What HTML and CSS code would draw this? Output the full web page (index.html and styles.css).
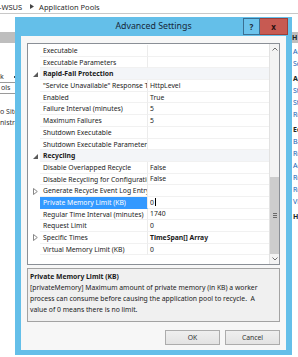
FILE: index.html
```html
<!DOCTYPE html>
<html>
<head>
<meta charset="utf-8">
<link rel="stylesheet" href="styles.css">
</head>
<body>
<div class="crumb">
  <span>-WSUS</span>
  <svg class="crumb-sep" width="4" height="5" viewBox="0 0 4 5"><polygon points="0,0 4,2.5 0,5" fill="#444"/></svg>
  <span>Application Pools</span>
</div>
<div class="workspace">
  <div class="left-pane">
    <div class="pane-head"></div>
    <div class="tree">
      <div class="tree-line">k<span class="tree-dot"></span></div>
      <div class="tree-line"><span class="tree-sel">ols</span></div>
      <div class="tree-line"></div>
      <div class="tree-line">o Sites</div>
      <div class="tree-line">nistration</div>
    </div>
  </div>
  <div class="center-pane"></div>
  <div class="right-pane">
    <div class="pane-head dark">H</div>
    <div class="actions">
      <div class="act">Add Application Pool...</div>
      <div class="act">Set Application Pool Defaults...</div>
      <div class="act head">Application Pool Tasks</div>
      <div class="act">Start</div>
      <div class="act">Stop</div>
      <div class="act">Recycle...</div>
      <div class="act head">Edit Application Pool</div>
      <div class="act">Basic Settings...</div>
      <div class="act">Recycling...</div>
      <div class="act">Advanced Settings...</div>
      <div class="act">Rename</div>
      <div class="act">Remove</div>
      <div class="act">View Applications</div>
      <div class="act head">Help</div>
    </div>
  </div>
</div>

<div class="dialog">
  <div class="titlebar">
    <div></div>
    <div class="title">Advanced Settings</div>
    <div class="caption-btns">
      <div class="cap help">?</div>
      <div class="cap close">x</div>
    </div>
  </div>
  <div class="client">
    <div class="grid">
      <div class="rows">
        <div class="row"><div class="g"></div><div class="n">Executable</div><div class="v"></div></div>
        <div class="row"><div class="g"></div><div class="n">Executable Parameters</div><div class="v"></div></div>
        <div class="row cat"><div class="g"><svg width="5" height="5" viewBox="0 0 5 5"><polygon points="5,0 5,5 0,5" fill="#5a5a5a"/></svg></div><div class="n">Rapid-Fail Protection</div></div>
        <div class="row"><div class="g"></div><div class="n">"Service Unavailable" Response Type</div><div class="v">HttpLevel</div></div>
        <div class="row"><div class="g"></div><div class="n">Enabled</div><div class="v">True</div></div>
        <div class="row"><div class="g"></div><div class="n">Failure Interval (minutes)</div><div class="v">5</div></div>
        <div class="row"><div class="g"></div><div class="n">Maximum Failures</div><div class="v">5</div></div>
        <div class="row"><div class="g"></div><div class="n">Shutdown Executable</div><div class="v"></div></div>
        <div class="row"><div class="g"></div><div class="n">Shutdown Executable Parameters</div><div class="v"></div></div>
        <div class="row cat"><div class="g"><svg width="5" height="5" viewBox="0 0 5 5"><polygon points="5,0 5,5 0,5" fill="#5a5a5a"/></svg></div><div class="n">Recycling</div></div>
        <div class="row"><div class="g"></div><div class="n">Disable Overlapped Recycle</div><div class="v">False</div></div>
        <div class="row"><div class="g"></div><div class="n">Disable Recycling for Configuration Changes</div><div class="v">False</div></div>
        <div class="row"><div class="g"><svg width="5" height="7" viewBox="0 0 5 7"><polygon points="0.5,0.5 4.3,3.5 0.5,6.5" fill="none" stroke="#7a7a7a" stroke-width="0.9"/></svg></div><div class="n">Generate Recycle Event Log Entry</div><div class="v"></div></div>
        <div class="row sel"><div class="g"></div><div class="n">Private Memory Limit (KB)</div><div class="v">0<span class="caret"></span></div></div>
        <div class="row"><div class="g"></div><div class="n">Regular Time Interval (minutes)</div><div class="v">1740</div></div>
        <div class="row"><div class="g"></div><div class="n">Request Limit</div><div class="v">0</div></div>
        <div class="row"><div class="g"><svg width="5" height="7" viewBox="0 0 5 7"><polygon points="0.5,0.5 4.3,3.5 0.5,6.5" fill="none" stroke="#7a7a7a" stroke-width="0.9"/></svg></div><div class="n">Specific Times</div><div class="v b">TimeSpan[] Array</div></div>
        <div class="row"><div class="g"></div><div class="n">Virtual Memory Limit (KB)</div><div class="v">0</div></div>
      </div>
      <div class="scrollbar">
        <div class="sb-btn"><svg width="6" height="4" viewBox="0 0 6 4"><polyline points="0.5,3.5 3,1 5.5,3.5" fill="none" stroke="#606060" stroke-width="0.9"/></svg></div>
        <div class="sb-track">
          <div class="sb-space"></div>
          <div class="sb-thumb"><span></span><span></span><span></span></div>
        </div>
        <div class="sb-btn"><svg width="6" height="4" viewBox="0 0 6 4"><polyline points="0.5,0.5 3,3 5.5,0.5" fill="none" stroke="#606060" stroke-width="0.9"/></svg></div>
      </div>
    </div>
    <div class="desc">
      <div class="desc-title">Private Memory Limit (KB)</div>
      <div class="desc-text">[privateMemory] Maximum amount of private memory (in KB) a worker<br>process can consume before causing the application pool to recycle.&nbsp; A<br>value of 0 means there is no limit.</div>
    </div>
    <div class="buttons">
      <div class="btn">OK</div>
      <div class="btn">Cancel</div>
    </div>
  </div>
</div>
</body>
</html>
```
FILE: styles.css
```css
* { box-sizing: border-box; margin: 0; padding: 0; }
html, body { width: 298px; height: 357px; }
body {
  overflow: hidden;
  background: #ffffff;
  font-family: "Noto Sans", "Liberation Sans", sans-serif;
  color: #1e1e1e;
  position: relative;
}

/* background IIS window */
.crumb {
  height: 14px;
  border-bottom: 1px solid #c8c8c8;
  display: flex;
  align-items: center;
  font-size: 7.5px;
  color: #2a2a2a;
  margin-left: -1px;
  white-space: nowrap;
}
.crumb-sep { margin: 0 5px 0 8px; }

.workspace {
  display: flex;
  padding-top: 18px;
  height: 343px;
}
.left-pane { width: 80px; overflow: hidden; }
.center-pane { flex: 1; }
.right-pane { width: 6px; overflow: hidden; }
.pane-head {
  height: 11px;
  background: #bebebe;
  font-size: 7px;
  line-height: 11px;
  font-weight: bold;
  color: #222;
  white-space: nowrap;
}
.tree { padding-top: 28px; font-size: 7px; color: #333; white-space: nowrap; }
.tree-line { height: 11.5px; line-height: 11.5px; display: flex; align-items: center; }
.tree-dot { width: 2px; height: 2px; background: #444; margin-left: 10px; }
.tree-sel { border: 1px solid #9a9a9a; padding: 0 8px 0 0; line-height: 10px; margin-left: -3px; padding-left: 3px; }
.actions { padding-top: 3px; font-size: 7px; white-space: nowrap; padding-left: 1px; }
.act { height: 12px; line-height: 12px; color: #1560b5; }
.act.head { color: #222; font-weight: bold; margin-top: 3px; }

/* dialog */
.dialog {
  position: absolute;
  left: 15px;
  top: 17px;
  width: 277px;
  height: 338px;
  background: #64bfe9;
  padding: 0 6px 5px;
  display: flex;
  flex-direction: column;
}
.titlebar {
  height: 19px;
  display: grid;
  grid-template-columns: 1fr auto 1fr;
  align-items: start;
}
.title {
  font-size: 8.8px;
  line-height: 19px;
  color: #17283a;
  white-space: nowrap;
}
.caption-btns {
  display: flex;
  justify-content: flex-end;
  margin-top: 1px;
  margin-right: -2px;
}
.cap {
  height: 17px;
  font-size: 8px;
  font-weight: bold;
  display: flex;
  align-items: center;
  justify-content: center;
}
.help {
  width: 17px;
  background: #6cc3ec;
  border: 1px solid #3b6f92;
  color: #1b2a38;
}
.close {
  width: 28px;
  background: #c75a52;
  border: 1px solid #9c3f39;
  border-left: none;
  color: #2a1010;
}

.client {
  flex: 1;
  background: #f7f7f7;
  padding: 7px 6px 5px;
  display: flex;
  flex-direction: column;
}

.grid {
  height: 222px;
  border: 1px solid #8a8f96;
  background: #ffffff;
  display: flex;
}
.rows { flex: 1; padding-top: 1px; overflow: hidden; }
.row {
  display: grid;
  grid-template-columns: 12px 108px 1fr;
  height: 11.7px;
  font-size: 6.8px;
  line-height: 11px;
  color: #1a1a1a;
}
.row .g {
  display: flex;
  align-items: center;
  padding-left: 5px;
  background: #ffffff;
}
.row .n {
  padding-left: 3px;
  white-space: nowrap;
  overflow: hidden;
  border-right: 1px solid #ececec;
  border-bottom: 1px solid #f1f1f1;
}
.row .v {
  padding-left: 2px;
  white-space: nowrap;
  overflow: hidden;
  border-bottom: 1px solid #f1f1f1;
  display: flex;
  align-items: center;
}
.row .v.b { font-weight: bold; }
.row.cat .n {
  grid-column: 2 / 4;
  font-weight: bold;
  background: #f3f5f8;
  border-right: none;
}
.row.sel .n { background: #3399ff; color: #ffffff; border-bottom-color: #3399ff; }
.caret { display: inline-block; width: 1px; height: 8px; background: #000; margin-left: 1px; }

.scrollbar {
  width: 10px;
  background: #f3f3f3;
  border-left: 1px solid #e2e2e2;
  display: flex;
  flex-direction: column;
}
.sb-btn { height: 10px; display: flex; align-items: center; justify-content: center; }
.sb-track { flex: 1; display: flex; flex-direction: column; }
.sb-space { flex: 1; }
.sb-thumb {
  height: 77px;
  background: #cdcdcd;
  display: flex;
  flex-direction: column;
  align-items: center;
  justify-content: center;
  gap: 1px;
}
.sb-thumb span { width: 4px; height: 1px; background: #6a6a6a; }

.desc {
  margin-top: 3px;
  height: 54px;
  border: 1px solid #a3a3a3;
  background: #f0f0f0;
  padding: 1.5px 2px 0;
  font-size: 6.8px;
  line-height: 11px;
  color: #1a1a1a;
}
.desc-title { font-weight: bold; }
.desc-text { white-space: nowrap; }

.buttons {
  margin-top: 8px;
  display: flex;
  justify-content: flex-end;
  gap: 5px;
}
.btn {
  width: 55px;
  height: 15px;
  border: 1px solid #acacac;
  background: linear-gradient(#efefef, #e3e3e3);
  font-size: 6.8px;
  line-height: 13px;
  text-align: center;
  color: #333;
}
```
